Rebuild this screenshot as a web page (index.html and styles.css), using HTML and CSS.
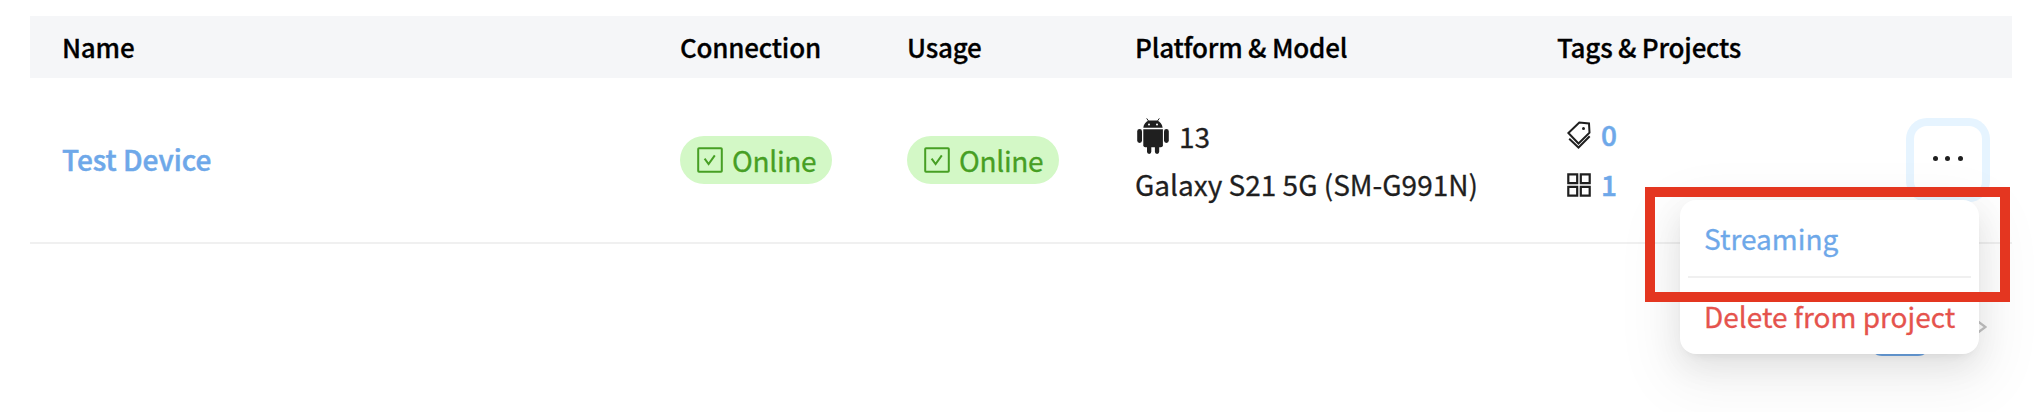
FILE: index.html
```html
<!DOCTYPE html>
<html lang="en">
<head>
<meta charset="utf-8">
<title>Devices</title>
<link rel="stylesheet" href="styles.css">
</head>
<body>
<main class="page">
  <section class="table">
    <div class="row head">
      <div class="cell">Name</div>
      <div class="cell">Connection</div>
      <div class="cell">Usage</div>
      <div class="cell">Platform &amp; Model</div>
      <div class="cell">Tags &amp; Projects</div>
      <div class="cell"></div>
    </div>
    <div class="row body">
      <div class="cell"><a class="device">Test Device</a></div>
      <div class="cell"><span class="pill"><svg class="check" viewBox="0 0 26 26"><rect x="1.2" y="1.2" width="23.6" height="23.6" rx=".8"/><path d="M7.6 11.6l4 5.4 6.2-8.6"/></svg><span>Online</span></span></div>
      <div class="cell"><span class="pill"><svg class="check" viewBox="0 0 26 26"><rect x="1.2" y="1.2" width="23.6" height="23.6" rx=".8"/><path d="M7.6 11.6l4 5.4 6.2-8.6"/></svg><span>Online</span></span></div>
      <div class="cell platform">
        <div class="os">
          <svg class="android" viewBox="0 0 32 36"><g class="solid"><path d="M6.3 9.8C6.5 6 9 3.6 11.9 2.5h8C23 3.6 25.3 6 25.6 9.8z"/><path d="M6.3 11.3h19.6v15.9q0 2-2 2H8.3q-2 0-2-2z"/><rect x=".2" y="11" width="4.8" height="14" rx="2.4"/><rect x="27" y="11" width="4.8" height="14" rx="2.4"/><path d="M10 28h4.3v5.8a2.15 2.15 0 0 1-4.3 0zM17.9 28h4.3v5.8a2.15 2.15 0 0 1-4.3 0z"/></g><path class="antenna" d="M9.7.4l2 2.9M22.3.4l-2 2.9"/><circle class="eye" cx="12" cy="6.6" r="1"/><circle class="eye" cx="20" cy="6.6" r="1"/></svg>
          <span>13</span>
        </div>
        <div class="model">Galaxy S21 5G (SM-G991N)</div>
      </div>
      <div class="cell counts">
        <div class="count"><svg class="tags" viewBox="0 0 24 28"><path d="M1.4 12L12.3 1.5l9.7.9.5 9.2L11.500 22.500z"/><path d="M2.2 17.800L11.500 26.500l11.200-11.200"/><circle cx="16.500" cy="7.500" r="1.500"/></svg><a>0</a></div>
        <div class="count"><svg class="apps" viewBox="0 0 24 24"><path d="M1.3 1.3h8.900v8.900H1.300zM13.800 1.300h8.900v8.900h-8.900zM1.300 13.800h8.900v8.900H1.300zM13.800 13.800h8.900v8.900h-8.900z"/></svg><a>1</a></div>
      </div>
      <div class="cell actions">
        <button class="more" aria-label="More"><i></i><i></i><i></i></button>
      </div>
    </div>
  </section>
  <nav class="pager"><span class="current"></span><svg class="next" viewBox="0 0 12 20"><path d="M1 3l9.500 7L1 17"/></svg></nav>
  <div class="menu">
    <a class="item">Streaming</a>
    <hr class="divider">
    <a class="item danger">Delete from project</a>
  </div>
  <div class="highlight"></div>
</main>
</body>
</html>
```
FILE: styles.css
```css
* { box-sizing: border-box; }
body {
  margin: 0;
  background: #fff;
  color: #1f1f1f;
  font: 400 28px/44px "Noto Sans CJK KR", sans-serif;
  -webkit-text-stroke: .3px currentColor;
}
svg { display: block; flex: none; fill: none; stroke: currentColor; }
.page {
  position: relative;
  height: 412px;
  padding: 16px 24px 0 30px;
  overflow: hidden;
}
.row {
  display: grid;
  grid-template-columns: 618px 227px 228px 422px 349px 1fr;
  align-items: center;
}
.cell { padding-left: 32px; white-space: nowrap; }
.head {
  height: 62px;
  background: #f5f6f8;
  color: #000;
  font-size: 26px;
  font-weight: 500;
  letter-spacing: -.22px;
}
.body { height: 166px; border-bottom: 2px solid #f0f0f0; }
.device, .count a { color: #6ea8e9; font-weight: 500; -webkit-text-stroke-width: .5px; }
.device { display: block; padding-bottom: 2px; }
.count a { padding-bottom: 3px; }
.pill {
  display: flex;
  align-items: center;
  gap: 9px;
  width: 152px;
  height: 48px;
  padding-left: 17px;
  border-radius: 24px;
  background: #d3f8c6;
  color: #479f24;
  letter-spacing: -.3px;
}
.check { width: 26px; height: 26px; stroke-width: 2; }
.os { display: flex; align-items: center; gap: 10px; height: 48px; }
.android { width: 32px; height: 36px; margin-left: 2px; }
.solid { fill: currentColor; stroke: none; }
.antenna { stroke-width: 1; }
.eye { fill: #fff; stroke: none; }
.model { height: 48px; line-height: 48px; }
.counts { padding-left: 42px; }
.count { display: flex; align-items: center; gap: 10px; height: 50px; }
.tags { width: 24px; height: 28px; stroke-width: 2; }
.tags circle { fill: currentColor; stroke: none; }
.apps { width: 24px; height: 24px; stroke-width: 2.2; }
.actions { padding-left: 40px; }
.more {
  display: flex;
  align-items: center;
  justify-content: center;
  gap: 7.5px;
  width: 68px;
  height: 68px;
  padding: 0 1px 3px 0;
  border: 0;
  border-radius: 13px;
  background: #fff;
  box-shadow: 0 0 0 8px #e6f4ff;
}
.more i { width: 5px; height: 5px; border-radius: 50%; background: #1f1f1f; }
.pager {
  display: flex;
  align-items: center;
  justify-content: flex-end;
  gap: 45px;
  padding: 54px 25px 0 0;
}
.current { width: 60px; height: 58px; border-radius: 12px; background: #6ea8e9; }
.next { width: 12px; height: 20px; color: #c2c2c2; stroke-width: 2.2; }
.menu {
  position: absolute;
  left: 1680px;
  top: 200px;
  width: 299px;
  height: 154px;
  padding: 8px;
  border-radius: 16px;
  background: #fff;
  box-shadow: 0 12px 32px rgba(0, 0, 0, .08), 0 6px 12px -8px rgba(0, 0, 0, .12), 0 18px 56px 16px rgba(0, 0, 0, .05);
}
.item { display: block; height: 64px; padding-left: 16px; line-height: 60px; color: #6ea8e9; white-space: nowrap; }
.danger { line-height: 64px; color: #e5534d; }
.divider { height: 2px; margin: 4px 0 6px; border: 0; background: #f0f0f0; }
.highlight {
  position: absolute;
  left: 1645px;
  top: 187px;
  width: 365px;
  height: 115px;
  border: 10px solid #e43620;
}
```
